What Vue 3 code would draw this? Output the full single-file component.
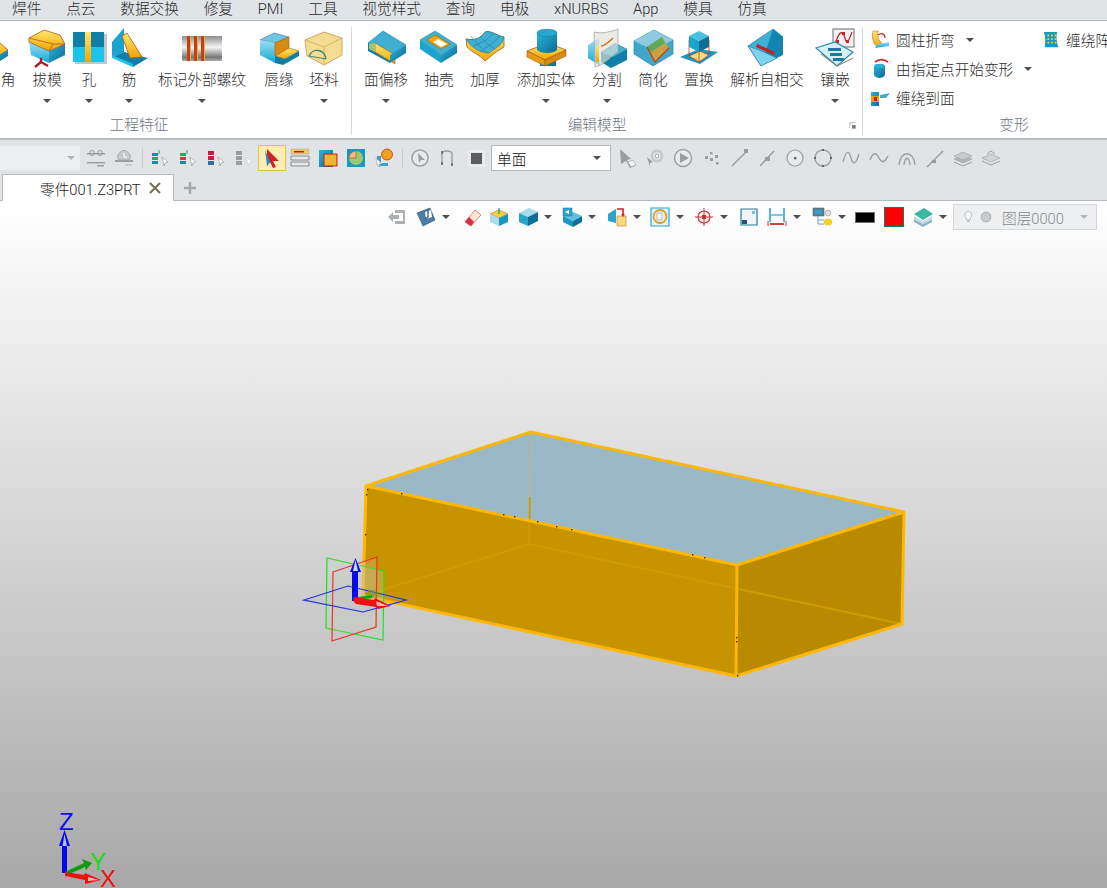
<script setup>
// Pantalla de CAD: cinta de comandos, barras de herramientas y vista 3D
import { h } from 'vue'

const Y = 'url(#gy)'
const B = 'url(#gb)'
const S = 'url(#gs)'
const T = 'url(#gt)'
const O = '#a85a1c'

// iconos: [d, relleno, trazo, grosor]
const big = {
  chamfer: [['M-22 18L0 4L20 22L0 34Z', Y, O], ['M-4 30L0 34L20 22V28L4 38Z', B]],
  draft: [
    ['M2 14L22 23V35L4 27Z', T], ['M22 23L38 16V27L22 35Z', B],
    ['M2 10L17 2L33 7L38 16L22 23L2 14Z', Y, O],
    ['M2 10L26 16L38 16M26 16L22 23', 'none', O],
    ['M14 30V34M14 34L8 39M14 34L21 38', 'none', '#b01c2a', 2.4]
  ],
  hole: [
    ['M6 6H38V36H6Z', '#c4c6c8'], ['M4 4H35V19H4Z', '#0f7fa8'], ['M4 19H35V34H4Z', '#1cc4ec'],
    ['M16 4H22V34H16Z', Y]
  ],
  rib: [
    ['M3 29L15 24L39 30L24 39Z', '#0f7fa8'], ['M3 14L15 0V24L3 30Z', '#1aa3cf'],
    ['M13 8L18 5L33 29L21 30Z', Y, O], ['M3 30L24 39V36L3 27Z', '#1cc4ec']
  ],
  thread: [
    ['M0 8H40V33H0Z', S], ['M5 8H8V33H5ZM12 8H15V33H12ZM19 8H22V33H19Z', '#c4400f'],
    ['M8 8H9V33H8ZM15 8H16V33H15ZM22 8H23V33H22Z', '#f0b040']
  ],
  lip: [
    ['M1 12L15 5L30 9L16 15Z', '#6fc6e4', '#2a7a98', 0.6], ['M1 12L16 15V35L1 27Z', T],
    ['M16 15L30 9V21L16 28Z', '#d98a10', O, 0.6], ['M16 28L30 20L40 23L26 31Z', Y, O, 0.6],
    ['M16 35V28L26 31L40 23V28L24 37Z', '#0f7fa8']
  ],
  blank: [
    ['M1 12L20 4L38 10V27L20 37L3 28Z', '#f4dc90', '#c9954a'],
    ['M1 12L20 19L38 10M20 19V37', 'none', '#d4a860'],
    ['M5 28A9 10 0 0 1 22 31', 'none', '#3f8a80', 1.4], ['M5 28L22 31', 'none', '#3f8a80', 1]
  ],
  offset: [
    ['M2 15L17 3L40 17L24 27Z', '#3fb0d4', '#1d7a9c', 0.6], ['M2 15L24 27V35L2 23Z', '#0f7fa8'],
    ['M9 15L29 27V36L24 33L9 24Z', Y, O, 0.6], ['M24 27L40 17V25L24 35Z', B],
    ['M3 16L9 15V24L3 21Z', '#9cc878']
  ],
  shell: [
    ['M1 12L16 3L38 17L22 27Z', '#3fb0d4', '#1d7a9c', 0.6], ['M8 12L16 7L31 16L22 21Z', '#f5a800', O, 0.6],
    ['M14 14L19 11L28 16L22 19Z', '#fff'], ['M1 12V21L22 35V27Z', '#1aa3cf'], ['M22 27L38 17V25L22 35Z', B]
  ],
  thicken: [
    ['M1 11C10 13 16 10 20 4C26 2 32 8 39 9V19C30 24 24 30 20 33C14 26 6 24 2 19Z', Y, O],
    ['M1 11C10 13 16 10 20 4C26 2 32 8 39 9C38 17 30 20 24 25C16 25 6 20 1 11Z', '#3fb0d4', '#1d7a9c', 0.6],
    ['M8 18C14 16 22 12 28 6M16 23C20 20 28 16 34 8M6 8C10 14 16 20 22 25M15 8C20 14 26 19 30 21', 'none', '#1d7a9c', 0.6]
  ],
  addsolid: [
    ['M14 24H30V38H14Z', B],
    ['M1 23L22 15L40 22L19 32Z', Y, O], ['M1 23V29L19 38V32Z', '#e89a10', O, 0.6], ['M19 32L40 22V28L19 38Z', '#d98a10', O, 0.6],
    ['M11 5H31V22C27 26 15 26 11 22Z', B],
    ['M11 5C11 0 31 0 31 5C31 10 11 10 11 5Z', '#27a8d0', '#1d7a9c', 0.6]
  ],
  split: [
    ['M1 17L12 10V32L13 38L1 30Z', T], ['M14 24L28 15L40 21V32L24 40L14 34Z', '#0f7fa8'],
    ['M14 24L28 15L40 21L26 29Z', '#3fb0d4'],
    ['M7 4C15 6 23 4 31 1V24C25 27 16 38 8 39Z', 'rgba(225,225,215,.65)', '#a8a8a0', 0.8],
    ['M9 18H12V34H9Z', Y], ['M14 18C18 18 22 14 26 10', 'none', '#d9781e', 1.6]
  ],
  simplify: [
    ['M1 13L21 2L40 12V26L20 38L1 26Z', '#3fa8c8', '#1d7a9c', 0.6], ['M1 13L21 2L40 12L20 22Z', '#8ccbe0'],
    ['M14 19L29 9L36 20L22 34Z', '#c8a040'], ['M14 19L29 9L32 15L18 24Z', '#5fa860'],
    ['M14 19L22 34L36 20', 'none', '#c83a10', 1.2]
  ],
  replace: [
    ['M1 29L20 21L39 24L21 36Z', '#1896c4'], ['M10 28L21 23L30 27L20 34Z', '#f6dc80', '#c83a10', 0.8],
    ['M10 12V28M30 12V27M20 18V34', 'none', '#c83a10', 0.8],
    ['M10 8L20 3L30 8L20 13Z', '#4cc0e4'], ['M10 8L20 13V24L10 19Z', '#1aa3cf'], ['M20 13L30 8V19L20 24Z', '#0c6f96']
  ],
  selfint: [
    ['M1 18L26 1L36 9L14 38Z', '#3fb0d4', '#1d7a9c', 0.6], ['M26 1L36 9V27L14 38Z', '#1286b0'],
    ['M1 18L14 38L30 30L12 22Z', '#7fd4ec', '#1d7a9c', 0.6], ['M10 16L28 24L27 27L9 19Z', '#c81e1e']
  ],
  inlay: [
    ['M18 1H39V19H18Z', '#f2f2f2', '#999', 1.4], ['M20 17C24 2 28 2 30 10C32 18 34 12 37 4', 'none', '#b02030', 1.2],
    ['M21 12h3v3h-3zM27 4h3v3h-3zM31 12h3v3h-3z', '#d02020'],
    ['M1 20L20 14L38 24L22 38Z', '#d8eef6', '#2a8cb0', 1.2],
    ['M13 20H26V23H13ZM15 25H27V28H15ZM18 30H29V33H18Z', '#1d7a9c'], ['M6 26L22 38L38 30', 'none', '#777', 1]
  ]
}

const G = '#9a9ea2'
const L = '#c8cbcd'
const small = {
  cylbend: [['M3 1H8C7 6 8 10 12 13L7 17C2 12 2 6 3 1Z', Y, O, 0.5], ['M8 14L19 12V16L5 18Z', T], ['M8 5C12 2 15 4 15 8', 'none', '#c81e1e', 1.3]],
  frompoint: [['M4 7H15V16C13 20 6 20 4 16Z', B], ['M4 7C4 4 15 4 15 7C15 10 4 10 4 7Z', '#2bb0d8'], ['M5 3C9 0 14 0 18 3', 'none', '#d02020', 1.6]],
  wrapface: [['M1 4H9V18H1Z', B], ['M1 8H9V14H1Z', '#e8a010'], ['M4 9H7V13H4Z', '#c81e1e'], ['M10 7L20 5L16 10L10 10Z', '#3fb0d4']],
  wraparr: [['M2 1H17C15 7 17 13 18 18H3C4 12 4 6 2 1Z', '#159cc4'], ['M6 4h2v2H6zM10 4h2v2h-2zM14 4h2v2h-2zM6 8h2v2H6zM10 8h2v2h-2zM14 8h2v2h-2zM6 12h2v2H6zM10 12h2v2h-2zM14 12h2v2h-2z', '#f5d020']],
  chain: [['M1 5H19V6.5H1ZM1 14H19V15.5H1Z', G], ['M6 2.5A2.5 2.5 0 1 0 6 7.5A2.5 2.5 0 1 0 6 2.5M14 2.5A2.5 2.5 0 1 0 14 7.5A2.5 2.5 0 1 0 14 2.5', 'none', G, 1], ['M11 17H18V18.5H11Z', G]],
  clock: [['M5 12A6 6 0 1 1 15 12Z', L, G, 0.8], ['M10 5V9H13', 'none', '#fff', 1], ['M1 12H19V14H1Z', G], ['M11 16H18V18H11Z', L]],
  tree1: [['M2 5H8V8H2Z', '#0f8fa8'], ['M2 9H8V12H2Z', '#2aa860'], ['M2 13H8V16H2Z', '#0f8fa8'], ['M9 2V6', 'none', '#2aa860', 1], ['M12 9L18 14L15 15L14 18Z', '#fff', G, 0.7]],
  tree2: [['M2 5H8V8H2Z', '#2aa860'], ['M2 9H8V12H2Z', '#c84040'], ['M2 13H8V16H2Z', '#0f8fa8'], ['M9 2V6', 'none', '#2aa860', 1], ['M12 9L18 14L15 15L14 18Z', '#fff', G, 0.7]],
  tree3: [['M2 3H8V7H2Z', '#c02040'], ['M2 8H8V12H2Z', '#c02040'], ['M2 13H8V17H2Z', '#3070a0'], ['M12 9L18 14L15 15L14 18Z', '#fff', G, 0.7]],
  tree4: [['M2 3H8V7H2ZM2 8H8V12H2ZM2 13H8V17H2Z', G], ['M12 9L18 14L15 15L14 18Z', '#fff', L, 0.7]],
  pick: [['M5 1L17 13L11 13L14 19L11 20L8 14L5 18Z', '#d02020'], ['M3 2L8 14L5 18Z', '#1896c4']],
  rows: [['M1 1H19V6H1Z', '#f0c860', '#aaa', 0.5], ['M4 3H14V4.5H4Z', '#c02020'], ['M1 8H19V12H1ZM1 14H19V18H1Z', '#e4e6e8', '#777', 0.8]],
  dashbox: [['M1 2H15V19H1Z', B], ['M6 6H19V18H6Z', '#f2b430'], ['M6 6H19V18H6Z', 'none', '#c81e1e', 1]],
  globe: [['M1 1H19V19H1Z', '#1896c4'], ['M10 3A7 7 0 1 0 10 17A7 7 0 1 0 10 3Z', '#9cc878'], ['M10 3A7 7 0 0 0 3 10H10Z', '#f0c080', '#c83a10', 0.6]],
  gear: [['M3 8V16C3 18 5 19 7 18H14V15H7V8Z', '#3aa0d0'], ['M13 1A5.5 5.5 0 1 0 13 12A5.5 5.5 0 1 0 13 1Z', '#f0a020', '#c83a10', 0.8], ['M2 10L8 16L5 16L6 19L3 17Z', '#fff', G, 0.6]],
  orbit: [['M10 2A8 8 0 1 0 10 18A8 8 0 1 0 10 2Z', '#e8eaec', G, 1.4], ['M8 5L15 12L11 12L9 15Z', G]],
  bracket: [['M4 16V6C4 2 14 2 14 6V16', 'none', G, 1.4], ['M3 3H5V6H3ZM13 15H15V18H13ZM3 14H5V17H3Z', '#777']],
  square: [['M3 3H18V18H3Z', '#e4e6e8', '#f4f4f4', 1], ['M5 5H16V16H5Z', '#5d5d5d']],
  cursor: [['M3 1L14 11L10 12L12 16L16 14L18 18L13 20L9 13L4 16Z', G], ['M11 14L16 12L19 17L14 19Z', '#f2f2f2', G, 0.6]],
  cursorgear: [['M12 3A5 5 0 1 0 12 13A5 5 0 1 0 12 3Z', '#eee', L, 3], ['M12 6A2 2 0 1 0 12 10A2 2 0 1 0 12 6Z', '#fff', G, 1], ['M2 9L8 14L5 15L5 19Z', G]],
  play: [['M10 1.5A8.5 8.5 0 1 0 10 18.5A8.5 8.5 0 1 0 10 1.5Z', '#e8eaec', G, 1.4], ['M7 5L16 10L7 15Z', G]],
  dots: [['M4 8h3v3H4zM9 4h2.5v2.5H9zM14 7h3v3h-3zM9 10h3v3H9zM15 14h2.5v2.5H15z', G]],
  line1: [['M3 18L17 4', 'none', G, 1.4], ['M15 1h4v4h-4z', G]],
  line2: [['M3 18L17 3', 'none', G, 1.4], ['M8 9h5v4H8z', G]],
  circle1: [['M10 2A8 8 0 1 0 10 18A8 8 0 1 0 10 2Z', '#e8eaec', G, 1.2], ['M9 9h2.4v2.4H9z', '#666']],
  circle2: [['M10 2A8 8 0 1 0 10 18A8 8 0 1 0 10 2Z', 'none', G, 1.4], ['M9 1h2v2H9zM9 17h2v2H9zM1 9h2v2H1zM17 9h2v2h-2z', '#666']],
  wave1: [['M2 14C5 2 8 2 10 10C12 18 15 16 18 6', 'none', G, 1.3]],
  wave2: [['M1 12C4 4 7 4 10 10C13 16 16 14 19 8', 'none', G, 1.5]],
  arch: [['M2 17C3 2 17 2 18 17M7 17C8 8 12 8 13 17', 'none', G, 1.3]],
  line3: [['M2 19L18 3', 'none', G, 1.4], ['M7 12h4v3H7z', G]],
  stack1: [['M1 11L10 7L19 11L10 15Z', '#b0b4b8', G, 0.6], ['M1 8L10 4L19 8L10 12Z', '#c8cbcd', G, 0.6], ['M1 14L10 18L19 14', 'none', G, 1]],
  stack2: [['M1 10L10 6L19 10L10 14Z', '#d0d2d4', G, 0.6], ['M1 13L10 17L19 13', 'none', G, 1], ['M6 6L10 3L14 6', 'none', G, 1]],
  exit: [['M8 3H18V17H8V14H16V6H8Z', '#aeb1b4'], ['M1 10L6 5V8H12V12H6V15Z', '#aeb1b4']],
  view: [['M1 6L14 1L19 13L7 19Z', '#4a7ea8', '#26506e', 0.6], ['M9 5L15 3L16 10L10 12Z', '#fff'], ['M12 3V10L9 12', 'none', '#26506e', 1.2]],
  eraser: [['M2 15L12 3L18 8L8 19Z', '#f6e8d0', '#c86060', 0.7], ['M2 15L6 10L11 15L8 19Z', '#d83040']],
  upcube: [['M1 7L10 3L19 7L10 11Z', '#f5d040', O, 0.5], ['M1 7L10 11V19L1 15Z', '#a8dcec'], ['M10 11L19 7V15L10 19Z', '#1896c4'], ['M10 7V1', 'none', '#20a040', 1.2]],
  cube: [['M1 6L11 1L20 5L10 10Z', '#a8dcec'], ['M1 6L10 10V19L1 15Z', '#2ba4cc'], ['M10 10L20 5V14L10 19Z', '#0f6f96']],
  cube2: [['M1 9L11 5L20 9L11 14Z', '#5cc0e0'], ['M1 9L11 14V20L1 15Z', '#1896c4'], ['M11 14L20 9V15L11 20Z', '#0f6f96'], ['M1 1H10V9H1Z', '#2ba4cc', '#1d7a9c', 0.5], ['M3 5L7 3V7Z', '#fff']],
  fold: [['M1 7L9 2V16L1 14Z', '#2ba4cc'], ['M10 9H19V19H10Z', '#f5d880', '#c89030', 0.7], ['M10 2H16V8', 'none', '#d02020', 1.6], ['M14 7L18 7L16 10Z', '#d02020']],
  magnify: [['M1 1H19V19H1Z', '#e8f4f8', '#2ba4cc', 1.2], ['M10 3A6.5 6.5 0 1 0 10 16A6.5 6.5 0 1 0 10 3Z', '#f2f2f2', '#d8a020', 1.8], ['M7 6H12V13H7Z', '#fff', '#888', 0.6]],
  target: [['M10 4A6 6 0 1 0 10 16A6 6 0 1 0 10 4Z', 'none', '#c83030', 1.2], ['M10 1V19M1 10H19', 'none', '#c83030', 1], ['M8 8H12V12H8Z', '#c83030']],
  frame: [['M2 2H18V18H2Z', '#eef4f8', '#2a7a98', 1.2], ['M3 13H8V17H3Z', '#26506e'], ['M13 4h3v3h-3z', '#6fc6e4']],
  measure: [['M3 1V15M17 1V15', 'none', '#2ba4cc', 1.6], ['M4 8H16', 'none', '#2ba4cc', 1.2], ['M3 17H17', 'none', '#c83030', 1.8], ['M1 14V19M19 14V19', 'none', '#c83030', 1]],
  lighttree: [['M1 1H12V9H1Z', '#5a7e96', '#666', 0.6], ['M3 3H10V7H3Z', '#2ba4cc'], ['M6 9V17H12M6 13H12', 'none', '#6ea0c0', 1], ['M16 12A3.2 3.2 0 1 0 16 18A3.2 3.2 0 1 0 16 12Z', '#f5d020'], ['M16 3A3 3 0 1 0 16 9A3 3 0 1 0 16 3Z', '#ddd', '#999', 0.6]],
  layers: [['M1 12L10 17L19 12V15L10 20L1 15Z', '#8fb4c8'], ['M1 9L10 14L19 9V12L10 17L1 12Z', '#c8dce4'], ['M1 7L11 1L20 7L10 13Z', '#38b8a0']],
  bulb: [['M9 2A5 5 0 0 0 6 11V14H12V11A5 5 0 0 0 9 2Z', '#f8f8f8', '#a8abae', 1], ['M7 15H11V17H7Z', '#b0b3b6']],
  lamp: [['M10 3A7 7 0 1 0 10 17A7 7 0 1 0 10 3Z', '#c8cacc', '#9a9ea2', 1]],
  launcher: [['M4 4H16M4 4V16', 'none', '#9a9ea2', 1.6], ['M9 9H17V17H9Z', '#777']]
}

const Ico = (props) => {
  const isBig = props.name in big
  const paths = isBig ? big[props.name] : small[props.name]
  const box = isBig ? 40 : 20
  const size = props.size || box
  return h('svg', { width: size, height: size, viewBox: `0 0 ${box} ${box}`, style: 'overflow:visible;flex:none;display:block' },
    paths.map((p) => h('path', { d: p[0], fill: p[1], stroke: p[2] || 'none', 'stroke-width': p[3] || 0.8 })))
}
Ico.props = ['name', 'size']

const menus = ['焊件', '点云', '数据交换', '修复', 'PMI', '工具', '视觉样式', '查询', '电极', 'xNURBS', 'App', '模具', '仿真']

const grupoIngenieria = [
  { label: '角', w: 38, icon: 'chamfer' },
  { label: '拔模', w: 40, icon: 'draft', caret: true },
  { label: '孔', w: 44, icon: 'hole', caret: true },
  { label: '筋', w: 36, icon: 'rib', caret: true },
  { label: '标记外部螺纹', w: 110, icon: 'thread', caret: true },
  { label: '唇缘', w: 44, icon: 'lip' },
  { label: '坯料', w: 46, icon: 'blank', caret: true }
]
const grupoEdicion = [
  { label: '面偏移', w: 56, icon: 'offset', caret: true },
  { label: '抽壳', w: 50, icon: 'shell' },
  { label: '加厚', w: 42, icon: 'thicken' },
  { label: '添加实体', w: 80, icon: 'addsolid', caret: true },
  { label: '分割', w: 42, icon: 'split', caret: true },
  { label: '简化', w: 50, icon: 'simplify' },
  { label: '置换', w: 42, icon: 'replace' },
  { label: '解析自相交', w: 94, icon: 'selfint' },
  { label: '镶嵌', w: 42, icon: 'inlay', caret: true }
]
const filasDeformar = [
  { label: '圆柱折弯', icon: 'cylbend', caret: true },
  { label: '由指定点开始变形', icon: 'frompoint', caret: true },
  { label: '缠绕到面', icon: 'wrapface' }
]

const barra1 = ['chain', 'clock', '|', 'tree1', 'tree2', 'tree3', 'tree4', 'pick', 'rows', 'dashbox', 'globe', 'gear', '|', 'orbit', 'bracket', 'square']
const barra2 = ['cursor', 'cursorgear', 'play', 'dots', 'line1', 'line2', 'circle1', 'circle2', 'wave1', 'wave2', 'arch', 'line3', 'stack1', 'stack2']

// w = ancho de la celda, para que cada icono caiga en su sitio
const barraVista = [
  { icon: 'exit', w: 29 },
  { icon: 'view', w: 47, caret: true },
  { icon: 'eraser', w: 26 },
  { icon: 'upcube', w: 29 },
  { icon: 'cube', w: 44, caret: true },
  { icon: 'cube2', w: 45, caret: true },
  { icon: 'fold', w: 43, caret: true },
  { icon: 'magnify', w: 44, caret: true },
  { icon: 'target', w: 45, caret: true },
  { icon: 'frame', w: 28 },
  { icon: 'measure', w: 45, caret: true },
  { icon: 'lighttree', w: 43, caret: true }
]

const puntos = [[367, 489], [366, 494], [401, 493], [503, 514], [514, 516], [537, 521], [556, 526], [571, 529], [692, 554], [704, 557], [736, 637], [736, 641], [737, 675], [365, 534]]
</script>

<template>
  <div class="pantalla">
    <nav class="menu">
      <span v-for="m in menus" :key="m">{{ m }}</span>
    </nav>

    <section class="ribbon">
      <div class="grupo ing">
        <div class="grupo-cuerpo">
          <div v-for="b in grupoIngenieria" :key="b.label" class="boton" :style="{ width: b.w + 'px' }">
            <Ico :name="b.icon" />
            <span class="boton-label">{{ b.label }}</span>
            <i v-if="b.caret" class="caret"></i>
          </div>
        </div>
        <div class="grupo-titulo titulo-ing">工程特征</div>
      </div>

      <div class="grupo edi">
        <div class="grupo-cuerpo">
          <div v-for="b in grupoEdicion" :key="b.label" class="boton" :style="{ width: b.w + 'px' }">
            <Ico :name="b.icon" />
            <span class="boton-label">{{ b.label }}</span>
            <i v-if="b.caret" class="caret"></i>
          </div>
        </div>
        <div class="grupo-titulo titulo-edi">
          编辑模型
          <Ico class="lanzador" name="launcher" :size="9" />
        </div>
      </div>

      <div class="grupo def">
        <div class="def-cuerpo">
          <div class="def-col">
            <div v-for="f in filasDeformar" :key="f.label" class="def-fila">
              <Ico :name="f.icon" :size="20" />
              <span>{{ f.label }}</span>
              <i v-if="f.caret" class="caret"></i>
            </div>
          </div>
          <div class="def-fila">
            <Ico name="wraparr" :size="18" />
            <span>缠绕阵列</span>
          </div>
        </div>
        <div class="grupo-titulo titulo-def">变形</div>
      </div>
    </section>

    <section class="barra">
      <div class="combo-vacio"><i class="caret claro"></i></div>
      <template v-for="(ic, i) in barra1" :key="i">
        <span v-if="ic === '|'" class="sep"></span>
        <span v-else class="celda" :class="{ activa: ic === 'pick' }"><Ico :name="ic" :size="20" /></span>
      </template>
      <div class="combo">单面<i class="caret"></i></div>
      <span v-for="ic in barra2" :key="ic" class="celda"><Ico :name="ic" :size="20" /></span>
    </section>

    <section class="pestanas">
      <div class="pestana">
        <span>零件001.Z3PRT</span>
        <svg class="cerrar" width="12" height="12" viewBox="0 0 12 12"><path d="M1 1L11 11M11 1L1 11" stroke="#7d6f55" stroke-width="2.2" fill="none" /></svg>
      </div>
      <svg class="mas" width="14" height="14" viewBox="0 0 14 14"><path d="M7 1V13M1 7H13" stroke="#a3a6a9" stroke-width="2.4" fill="none" /></svg>
    </section>

    <main class="vista">
      <svg class="escena" width="1107" height="687" viewBox="0 201 1107 687">
        <defs>
          <linearGradient id="gy" x1="0" y1="0" x2="0" y2="1"><stop offset="0" stop-color="#ffe870" /><stop offset="1" stop-color="#f2a400" /></linearGradient>
          <linearGradient id="gb" x1="0" y1="0" x2="1" y2="1"><stop offset="0" stop-color="#2ab4dc" /><stop offset="1" stop-color="#0a6a90" /></linearGradient>
          <linearGradient id="gt" x1="0" y1="0" x2="0" y2="1"><stop offset="0" stop-color="#9fe0f2" /><stop offset="1" stop-color="#12a8d4" /></linearGradient>
          <linearGradient id="gs" x1="0" y1="0" x2="0" y2="1"><stop offset="0" stop-color="#8c8c8c" /><stop offset=".45" stop-color="#f4f4f4" /><stop offset=".85" stop-color="#777" /><stop offset="1" stop-color="#aaa" /></linearGradient>
        </defs>

        <!-- pieza -->
        <polygon points="366,486 531,432 904,512 737,565" fill="#9bb8c6" />
        <polygon points="366,486 737,565 736,676 363,596" fill="#c79400" />
        <polygon points="737,565 904,512 902,624 736,676" fill="#b98900" />
        <path d="M531,432 L530,497" stroke="#b3b8a0" stroke-width="2" fill="none" />
        <path d="M530,497 L529,544 M363,596 L529,544 L902,624" stroke="#cf9c00" stroke-width="2" fill="none" />
        <path d="M366,486 L531,432 L904,512 L737,565 Z M366,486 L363,596 L736,676 L902,624 L904,512 M737,565 L736,676" stroke="#ffb700" stroke-width="3" stroke-linejoin="round" fill="none" />
        <rect v-for="p in puntos" :key="p[0] + '-' + p[1]" :x="p[0]" :y="p[1]" width="1.4" height="1.4" fill="#3a2c00" />

        <!-- triedro del origen -->
        <polygon points="327,558 384,571 383,640 326,628" fill="rgba(190,215,190,.28)" stroke="#22e022" stroke-width="1.2" />
        <polygon points="333,572 377,557 376,627 332,641" fill="rgba(210,190,190,.22)" stroke="#f03030" stroke-width="1.2" />
        <polygon points="304,600 348,586 406,600 363,612" fill="rgba(180,180,200,.12)" stroke="#2030e0" stroke-width="1.2" />
        <ellipse cx="372" cy="594" rx="7" ry="4" fill="#7a9a10" opacity=".6" />
        <path d="M358,597 L372,595 L372,598 L358,600 Z" fill="#10a010" />
        <path d="M352,601 V572 H350 L355.5,558 L361,572 H358 V601 Z" fill="#0808e8" />
        <path d="M355.5,560 L358,571 H353 Z" fill="#c8d8ff" />
        <path d="M354,597 L374,600 L375,598 L391,606 L378,609 L376,607 L356,604 Q352,601 354,597 Z" fill="#f01010" />
        <path d="M376,601 L388,606 L377,606 Z" fill="#ffb0b0" />

        <!-- triedro de la esquina -->
        <path d="M62,873 V846 H59 L64.5,830 L70,846 H67 V873 Z" fill="#0808e8" />
        <path d="M64.5,834 L67,846 H62.5 Z" fill="#aac0ff" />
        <path d="M65,872 L84,863 L82,859 L92,863 L86,870 L85,867 L67,875 Z" fill="#109a10" />
        <path d="M65,872 L84,875 L85,873 L101,880 L85,884 L85,880 L65,876 Z" fill="#f01010" />
        <path d="M88,877 L99,880 L88,881 Z" fill="#ffb0b0" />
        <text class="eje" x="59" y="830" fill="#1010e8">Z</text>
        <text class="eje" x="90" y="870" fill="#10e010">Y</text>
        <text class="eje" x="100" y="887" fill="#f01010">X</text>
      </svg>

      <div class="vista-barra">
        <div v-for="(it, i) in barraVista" :key="i" class="vcelda" :style="{ width: it.w + 'px' }">
          <Ico :name="it.icon" :size="20" />
          <i v-if="it.caret" class="caret"></i>
        </div>
        <span class="muestra negra"></span>
        <span class="muestra roja"></span>
        <div class="vcelda capas">
          <Ico name="layers" :size="20" />
          <i class="caret"></i>
        </div>
        <div class="capa">
          <Ico name="bulb" :size="14" />
          <Ico name="lamp" :size="14" />
          <span class="capa-txt">图层0000</span>
          <i class="caret claro"></i>
        </div>
      </div>
    </main>
  </div>
</template>

<style scoped>
.pantalla {
  width: 1107px;
  height: 888px;
  display: flex;
  flex-direction: column;
  overflow: hidden;
  font-family: Roboto, "Noto Sans CJK SC", sans-serif;
  font-size: 14.67px;
  font-weight: 300;
  color: #2b2b2b;
}

.menu {
  height: 20px;
  display: flex;
  gap: 24.8px;
  padding-left: 12px;
  align-items: center;
  background: #e1e4e7;
  border-bottom: 1px solid #b5b9bd;
  line-height: 20px;
  flex: none;
  margin-top: -1px;
  padding-bottom: 1px;
  box-sizing: content-box;
}

.ribbon {
  height: 111px;
  padding-top: 6px;
  background: #fff;
  border-bottom: 1px solid #b9bcc0;
  display: flex;
  flex: none;
}

.grupo {
  height: 108px;
  padding-top: 1px;
  box-sizing: border-box;
  border-right: 1px solid #d6d8db;
  display: flex;
  flex-direction: column;
  flex: none;
}

.ing { margin-left: -11px; padding-right: 4px; box-sizing: content-box; height: 107px; }
.edi { padding-left: 6px; padding-right: 6px; box-sizing: content-box; height: 107px; }
.def { width: 302px; padding-left: 7px; border-right: none; box-sizing: border-box; }

.grupo-cuerpo {
  height: 87px;
  display: flex;
}

.boton {
  display: flex;
  flex-direction: column;
  align-items: center;
  flex: none;
  white-space: nowrap;
}

.boton-label {
  line-height: 20px;
  margin-top: 2px;
}

.boton .caret {
  margin-top: 9px;
}

.grupo-titulo {
  position: relative;
  height: 20px;
  line-height: 20px;
  text-align: center;
  color: #6d7480;
}

/* la cinta sigue a la izquierda, fuera de la pantalla */
.titulo-ing { padding-right: 58px; }
.titulo-edi { padding-right: 20px; }
.titulo-def { margin-left: -7px; }

.lanzador {
  position: absolute;
  right: -1px;
  top: 6px;
}

.def-cuerpo {
  height: 87px;
  display: flex;
  margin-top: -3px;
  margin-bottom: 3px;
}

.def-col {
  width: 172px;
  flex: none;
}

.def-fila {
  height: 29px;
  display: flex;
  align-items: center;
  gap: 6px;
  white-space: nowrap;
}

.def-fila .caret {
  margin-left: 5px;
}

.caret {
  display: inline-block;
  width: 0;
  height: 0;
  border-left: 4px solid transparent;
  border-right: 4px solid transparent;
  border-top: 4px solid #4d4d4d;
  flex: none;
}

.caret.claro {
  border-top-color: #b0b3b6;
}

.barra {
  height: 30px;
  padding-top: 3px;
  display: flex;
  align-items: center;
  background: #e1e4e7;
  border-top: 1px solid #bcc0c4;
  flex: none;
  overflow: hidden;
}

.combo-vacio {
  width: 80px;
  height: 24px;
  margin-right: 2px;
  background: #ebedef;
  flex: none;
  position: relative;
}

.combo-vacio .caret {
  position: absolute;
  right: 5px;
  top: 10px;
}

.celda {
  width: 28px;
  height: 26px;
  display: flex;
  align-items: center;
  justify-content: center;
  flex: none;
  box-sizing: border-box;
}

.activa {
  background: #fdeeb8;
  border: 1px solid #e8c050;
}

.sep {
  width: 8px;
  height: 20px;
  flex: none;
  background: linear-gradient(#c8cbce, #c8cbce) center / 1px 100% no-repeat;
}

.combo {
  width: 120px;
  height: 26px;
  margin: 0 2px 0 1px;
  padding: 0 9px 0 5px;
  box-sizing: border-box;
  background: #fff;
  border: 1px solid #b5b9bd;
  display: flex;
  align-items: center;
  justify-content: space-between;
  flex: none;
  color: #111;
}

.pestanas {
  height: 27px;
  background: #e1e4e7;
  border-bottom: 1px solid #b5b9bd;
  display: flex;
  align-items: flex-end;
  flex: none;
}

.pestana {
  width: 172px;
  height: 27px;
  margin-left: 2px;
  margin-bottom: -1px;
  box-sizing: border-box;
  background: #fff;
  border: 1px solid #b5b9bd;
  border-bottom: none;
  display: flex;
  align-items: center;
  padding-left: 37px;
  gap: 8px;
  white-space: nowrap;
  color: #1a1a1a;
}

.cerrar { flex: none; }
.mas { margin: 0 0 5px 9px; }

.vista {
  position: relative;
  flex: 1;
  background: linear-gradient(#ffffff, #a8a8a8);
}

.escena {
  position: absolute;
  left: 0;
  top: 0;
}

.eje {
  font-family: "Liberation Sans", sans-serif;
  font-size: 24px;
}

.vista-barra {
  position: relative;
  height: 26px;
  padding: 3px 0 0 387px;
  display: flex;
  align-items: center;
}

.vcelda {
  display: flex;
  align-items: center;
  gap: 6px;
  flex: none;
}

.muestra {
  flex: none;
  box-sizing: border-box;
}

.negra {
  width: 20px;
  height: 11px;
  margin-right: 9px;
  background: #000;
  border: 1px solid #6e6e6e;
}

.roja {
  width: 20px;
  height: 20px;
  margin-right: 9px;
  background: #f00;
  border: 1px solid #0a7a7a;
}

.capas {
  width: 40px;
}

.capa {
  width: 144px;
  height: 26px;
  box-sizing: border-box;
  background: #eeeff0;
  border: 1px solid #d4d8de;
  display: flex;
  align-items: center;
  gap: 3px;
  padding: 0 8px;
  flex: none;
  color: #85898e;
}

.capa-txt {
  margin-left: 6px;
  flex: 1;
}
</style>

<style>
html, body {
  margin: 0;
  background: #fff;
}
</style>
